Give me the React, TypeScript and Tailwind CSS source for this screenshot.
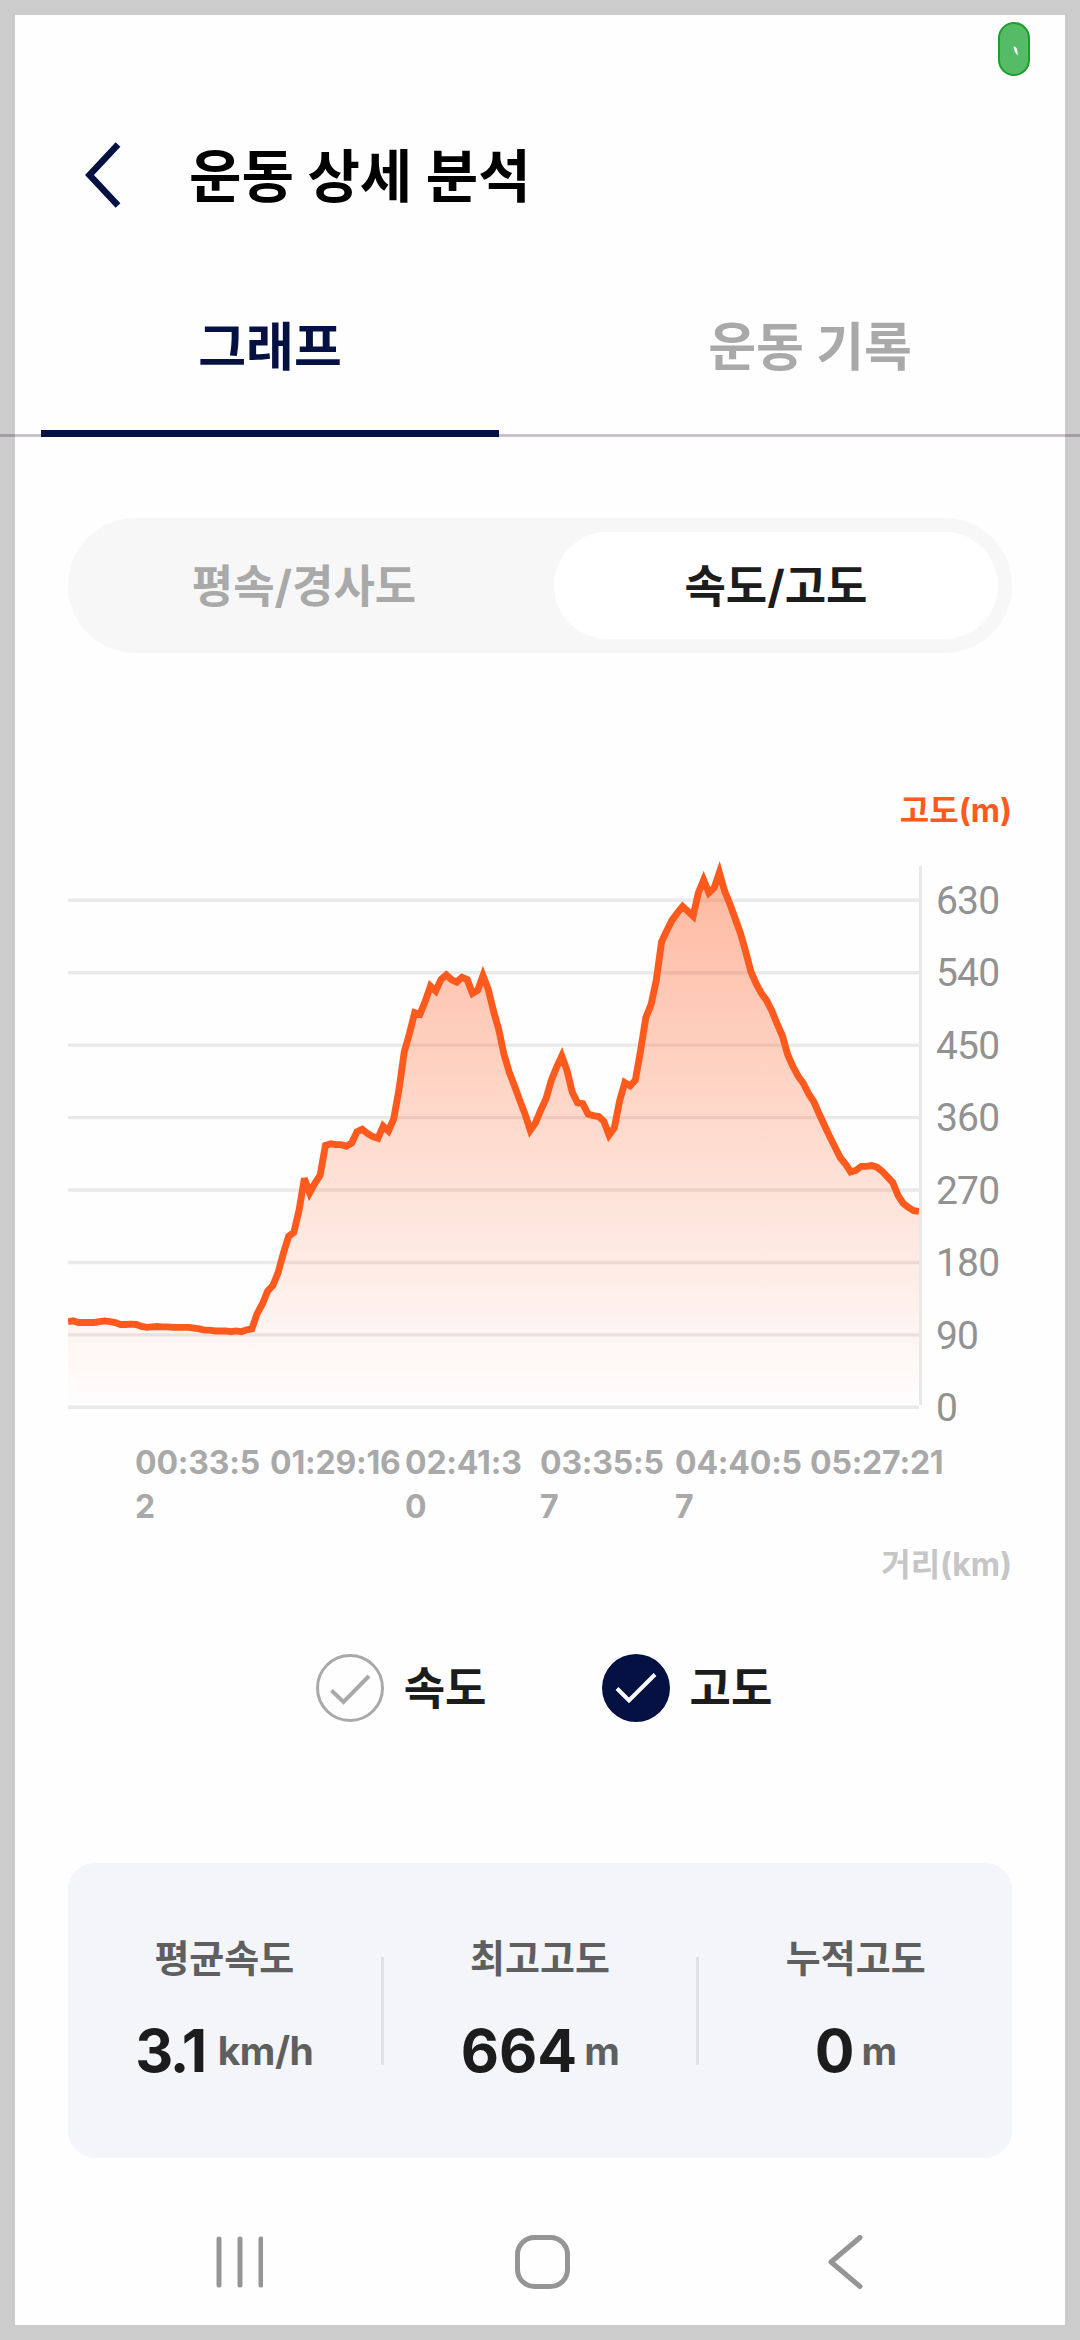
import React, { useState } from 'react';
import clsx from 'clsx';

const FONT = "font-['Inter','Noto_Sans_CJK_KR',sans-serif]";

const ALTITUDES = [
  106, 107, 105, 105, 105, 105, 106, 107, 106, 105, 102.5, 102.5, 103, 102.5,
  100, 99, 99.5, 100, 99.5, 99.5, 99, 99, 99, 99, 98, 97, 95.5, 95.5, 94.5,
  94.5, 94.5, 93.5, 94.5, 93.5, 96, 97, 116, 128, 144, 151, 167, 191, 212, 217,
  245, 284, 266, 278, 288, 325, 327, 326, 326, 324, 328, 342, 345, 340, 336,
  334, 349, 343, 358, 394, 441, 464, 490, 488, 504, 523, 517, 531, 537, 531,
  528, 534, 531, 514, 518, 536, 519, 492, 469, 438, 416, 399, 381, 364, 344,
  353, 369, 383, 406, 422, 436, 418, 391, 378, 377, 364, 362, 361, 355, 338,
  347, 380, 403, 399, 406, 443, 484, 500, 531, 578, 592, 605, 614, 622, 616,
  610, 639, 655, 639, 645, 664, 641, 625, 607, 589, 566, 541, 526, 514, 505,
  492, 476, 461, 438, 423, 411, 402, 389, 379, 364, 350, 336, 323, 310, 302,
  292, 294, 299, 299, 300, 298, 293, 286, 279, 263, 253, 248, 244, 243,
];

const TICKS = [630, 540, 450, 360, 270, 180, 90, 0];

const TIMES = [
  '00:33:52',
  '01:29:16',
  '02:41:30',
  '03:35:57',
  '04:40:57',
  '05:27:21',
];

const STATS = [
  { label: '평균속도', value: '3.1', unit: 'km/h' },
  { label: '최고고도', value: '664', unit: 'm' },
  { label: '누적고도', value: '0', unit: 'm' },
];

const CHART_WIDTH = 851;
const CHART_BOTTOM = 547;
const PX_PER_METER = 72.43 / 90;

const toY = (meter: number) => CHART_BOTTOM - meter * PX_PER_METER;

function AltitudeChart() {
  const step = CHART_WIDTH / (ALTITUDES.length - 1);
  const line = ALTITUDES.map(
    (altitude, idx) => `${(idx * step).toFixed(2)},${toY(altitude).toFixed(2)}`,
  ).join(' ');

  return (
    <svg className="block h-[580px] w-[944px]" viewBox="0 0 944 580">
      <defs>
        <linearGradient
          id="altitude"
          gradientUnits="userSpaceOnUse"
          x1="0"
          y1={toY(664)}
          x2="0"
          y2={CHART_BOTTOM}
        >
          <stop offset="0" stopColor="#ff5a1e" stopOpacity="0.42" />
          <stop offset="1" stopColor="#ff5a1e" stopOpacity="0" />
        </linearGradient>
        <clipPath id="plot">
          <rect x="0" y="0" width={CHART_WIDTH} height={CHART_BOTTOM} />
        </clipPath>
      </defs>
      {TICKS.map((tick) => (
        <line
          key={tick}
          x1="0"
          x2={CHART_WIDTH}
          y1={toY(tick) + 0.3}
          y2={toY(tick) + 0.3}
          stroke="#e9e9e9"
          strokeWidth="3.4"
        />
      ))}
      <line x1="852.5" x2="852.5" y1="6" y2="545" stroke="#e8e8e8" strokeWidth="3" />
      <g clipPath="url(#plot)">
        <polygon
          points={`0,${CHART_BOTTOM} ${line} ${CHART_WIDTH},${CHART_BOTTOM}`}
          fill="url(#altitude)"
        />
        <polyline
          points={line}
          fill="none"
          stroke="#ff5a1e"
          strokeWidth="6.9"
          strokeMiterlimit="3.9"
        />
      </g>
      {TICKS.map((tick) => (
        <text
          key={tick}
          x="868"
          y={toY(tick) + 14}
          fill="#929292"
          className="font-['Roboto',sans-serif] text-[39px] tracking-[-0.8px]"
        >
          {tick}
        </text>
      ))}
    </svg>
  );
}

function CheckItem({
  label,
  checked,
  onToggle,
}: {
  label: string;
  checked: boolean;
  onToggle: () => void;
}) {
  return (
    <button className="flex items-center gap-5" onClick={onToggle}>
      <svg className="size-[68px]" viewBox="0 0 68 68" fill="none">
        <circle
          cx="34"
          cy="34"
          r={checked ? 34 : 32.5}
          fill={checked ? '#051142' : 'none'}
          stroke={checked ? 'none' : '#a9a9a9'}
          strokeWidth="3"
        />
        <path
          d={checked ? 'M15 34.5 27 46.5 53 20.5' : 'M15.5 36.5 27.5 48 53 22'}
          stroke={checked ? '#fff' : '#a9a9a9'}
          strokeWidth="4"
        />
      </svg>
      <span className="pt-[2px] text-[45px] leading-[60px] font-bold text-[#1c1c1c]">
        {label}
      </span>
    </button>
  );
}

export default function App() {
  const [tab, setTab] = useState(0);
  const [mode, setMode] = useState(1);
  const [showSpeed, setShowSpeed] = useState(false);
  const [showAltitude, setShowAltitude] = useState(true);

  return (
    <div
      className={clsx(
        FONT,
        'relative flex h-[2340px] w-[1080px] flex-col border-[15px] border-[#cccccc] bg-[#fefefe]',
      )}
    >
      <div className="absolute top-[7px] left-[983px] flex h-[54px] w-8 items-center justify-center rounded-full border-2 border-[#1c9f2b] bg-[#55bb66]">
        <svg className="mt-1 ml-1 h-[10px] w-[6px]" viewBox="0 0 6 10">
          <path d="M0.5 0.5Q3 0 4 3L5 9.5Q1.5 7 0.5 0.5Z" fill="#fff" />
        </svg>
      </div>

      <header className="mt-[120px] flex h-20 items-center pl-[70px]">
        <svg className="h-[66px] w-9" viewBox="0 0 36 66" fill="none">
          <path d="M33 2.5 4.5 33 33 63.5" stroke="#051142" strokeWidth="6.5" />
        </svg>
        <h1 className="ml-[68px] pt-[3px] text-[57px] leading-20 font-bold text-black">
          운동 상세 분석
        </h1>
      </header>

      <nav className="-mx-[15px] mt-[65px] grid h-[157px] grid-cols-2 border-b-[3px] border-[rgba(28,5,42,0.235)]">
        {['그래프', '운동 기록'].map((name, idx) => (
          <button
            key={name}
            className={clsx(
              'relative flex justify-center pt-[28px] text-[52px] leading-[80px] font-bold',
              tab === idx ? 'text-[#051142]' : 'text-[#a9a9a9]',
            )}
            onClick={() => setTab(idx)}
          >
            {name}
            {tab === idx && (
              <span className="absolute -bottom-[3px] left-[41px] h-[7px] w-[458px] bg-[#051142]" />
            )}
          </button>
        ))}
      </nav>

      <main className="px-[53px]">
        <div className="mt-[81px] flex h-[135px] rounded-full bg-[#f7f7f7] p-[14px]">
          {['평속/경사도', '속도/고도'].map((name, idx) => (
            <button
              key={name}
              className={clsx(
                'flex-1 rounded-full pt-[2px] text-[45px] font-bold',
                mode === idx ? 'bg-white text-[#1c1c1c]' : 'text-[#a9a9a9]',
                idx === 1 && 'ml-7',
              )}
              onClick={() => setMode(idx)}
            >
              {name}
            </button>
          ))}
        </div>

        <p className="mt-[134px] text-right text-[32px] leading-[48px] font-bold text-[#ff5a1e]">
          고도(m)
        </p>
        <div className="mt-[25px]">
          <AltitudeChart />
        </div>
        <div className="flex h-[88px] pt-px pl-[67px]">
          {TIMES.map((time) => (
            <span
              key={time}
              className="w-[135px] text-[32px] leading-[44px] font-bold tracking-[-0.2px] break-all text-[#a9a9a9]"
            >
              {time}
            </span>
          ))}
        </div>
        <p className="mt-[13px] text-right text-[32px] leading-[48px] font-bold text-[#c6c6c6]">
          거리(km)
        </p>

        <div className="mt-[65px] flex justify-center gap-[115px] pl-2">
          <CheckItem
            label="속도"
            checked={showSpeed}
            onToggle={() => setShowSpeed((prev) => !prev)}
          />
          <CheckItem
            label="고도"
            checked={showAltitude}
            onToggle={() => setShowAltitude((prev) => !prev)}
          />
        </div>

        <section className="mt-[141px] flex h-[295px] items-center rounded-[27px] bg-[#f3f5f9]">
          {STATS.map(({ label, value, unit }, idx) => (
            <React.Fragment key={label}>
              {idx > 0 && <div className="h-[108px] w-[3px] bg-[#e0e2e3]" />}
              <div className="flex flex-1 flex-col items-center pb-[6px]">
                <span className="text-[38px] leading-[56px] font-bold text-[#5f5f5f]">
                  {label}
                </span>
                <div className="mt-[30px] flex items-center gap-[7px]">
                  <span
                    className={clsx(
                      'text-[59px] leading-[70px] font-bold text-[#1c1c1c]',
                      value.includes('.') && 'mr-[6px] tracking-[-2.4px]',
                    )}
                  >
                    {value}
                  </span>
                  <span className="text-[39px] leading-[56px] font-bold tracking-[-0.5px] text-[#5f5f5f]">
                    {unit}
                  </span>
                </div>
              </div>
            </React.Fragment>
          ))}
        </section>
      </main>

      <footer className="mt-[77px] flex h-[56px] items-center">
        <svg className="ml-[200px] h-[56px] w-12" viewBox="0 0 48 56">
          <path
            d="M4 4V50M25 4V50M46 4V50"
            stroke="#959595"
            strokeWidth="5"
            strokeLinecap="round"
          />
        </svg>
        <svg className="ml-[252px] size-[56px]" viewBox="0 0 56 56" fill="none">
          <rect
            x="2.5"
            y="2.5"
            width="50"
            height="49"
            rx="17"
            stroke="#959595"
            strokeWidth="5"
          />
        </svg>
        <svg className="ml-[257px] h-[56px] w-9" viewBox="0 0 36 56" fill="none">
          <path
            d="M32 2.5 3 27 32 51.5"
            stroke="#959595"
            strokeWidth="5"
            strokeLinecap="round"
            strokeLinejoin="round"
          />
        </svg>
      </footer>
    </div>
  );
}
